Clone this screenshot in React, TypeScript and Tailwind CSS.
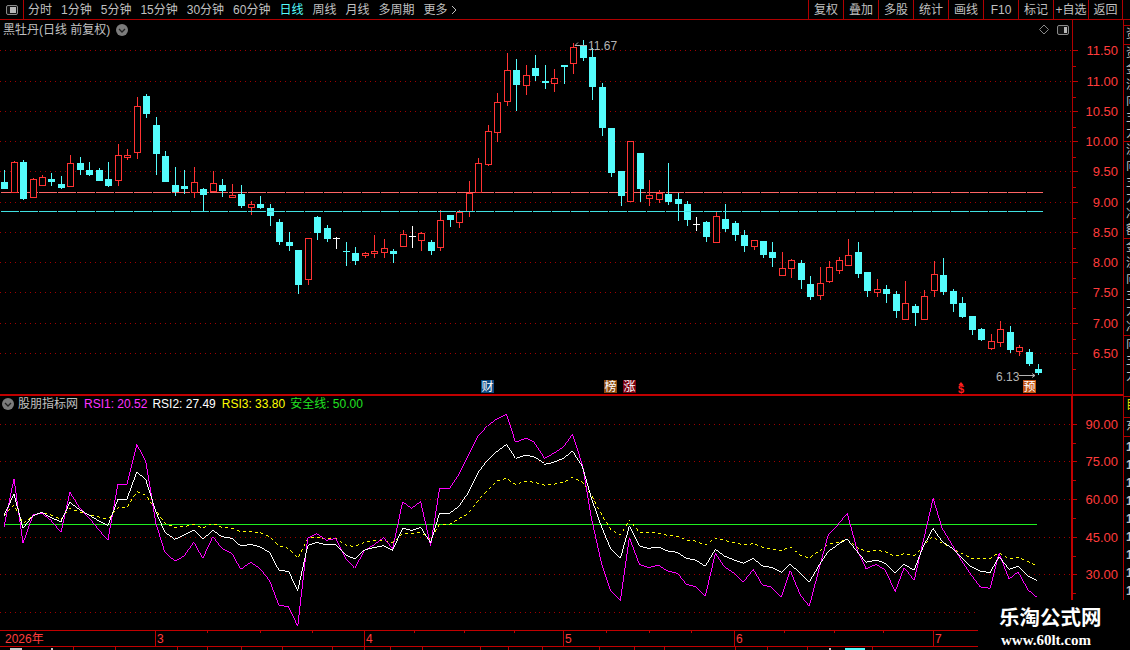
import React from 'react'

// [x, kind, high, top, bottom, low] in page pixels. c = down, r = up, w = doji
type Candle = [number, 'c' | 'r' | 'w', number, number, number, number]

const candles: Candle[] = [
  [4, 'c', 170, 182, 189, 189], [14, 'r', 161, 162, 192, 192], [23, 'c', 160, 162, 199, 200], [33, 'r', 178, 179, 197, 197],
  [42, 'r', 175, 177, 185, 186], [51, 'c', 173, 179, 182, 186], [61, 'c', 176, 184, 188, 189], [70, 'r', 155, 163, 186, 186],
  [80, 'c', 157, 163, 170, 175], [89, 'c', 162, 170, 175, 176], [99, 'c', 168, 170, 181, 181], [108, 'c', 162, 179, 186, 187],
  [118, 'r', 144, 155, 180, 186], [127, 'r', 149, 155, 157, 160], [137, 'r', 97, 106, 152, 159], [146, 'c', 94, 96, 114, 118],
  [156, 'c', 117, 125, 154, 175], [165, 'c', 151, 156, 182, 182], [175, 'c', 167, 185, 192, 196], [184, 'c', 170, 186, 189, 194],
  [194, 'r', 167, 182, 192, 198], [203, 'c', 188, 189, 195, 211], [213, 'r', 171, 183, 191, 191], [222, 'c', 179, 185, 191, 197],
  [232, 'r', 184, 195, 197, 197], [241, 'c', 185, 194, 206, 208], [251, 'r', 201, 204, 207, 215], [260, 'c', 196, 204, 208, 209],
  [270, 'c', 204, 208, 216, 226], [279, 'c', 219, 222, 242, 245], [289, 'c', 232, 242, 246, 251], [298, 'c', 250, 250, 285, 294],
  [308, 'r', 238, 238, 279, 285], [317, 'c', 216, 217, 233, 240], [327, 'c', 225, 228, 239, 242], [336, 'w', 237, 238, 238, 249],
  [346, 'c', 242, 251, 252, 266], [355, 'c', 247, 253, 261, 265], [365, 'r', 252, 253, 255, 258], [374, 'r', 235, 251, 253, 258],
  [384, 'r', 239, 248, 252, 258], [393, 'c', 249, 251, 254, 263], [403, 'r', 230, 234, 246, 246], [412, 'w', 226, 236, 236, 248],
  [421, 'r', 232, 233, 240, 251], [431, 'c', 240, 242, 251, 255], [440, 'r', 210, 220, 247, 251], [450, 'c', 215, 215, 220, 227],
  [459, 'r', 210, 212, 222, 228], [469, 'r', 181, 193, 211, 217], [478, 'r', 158, 163, 192, 193], [488, 'r', 125, 131, 164, 166],
  [497, 'r', 93, 102, 132, 142], [507, 'r', 53, 70, 101, 106], [516, 'c', 59, 70, 85, 111], [526, 'r', 65, 75, 85, 95],
  [535, 'c', 55, 68, 76, 81], [545, 'c', 65, 81, 83, 89], [554, 'r', 69, 78, 83, 92], [564, 'c', 65, 65, 67, 84],
  [573, 'r', 43, 47, 63, 74], [583, 'c', 40, 45, 58, 61], [592, 'c', 48, 57, 87, 100], [602, 'c', 83, 87, 128, 136],
  [611, 'c', 128, 128, 173, 177], [621, 'c', 171, 171, 196, 206], [630, 'r', 141, 141, 201, 201], [640, 'c', 153, 153, 189, 202],
  [649, 'r', 180, 195, 198, 206], [659, 'r', 190, 193, 199, 203], [668, 'c', 163, 194, 202, 205], [678, 'c', 193, 199, 204, 221],
  [687, 'c', 201, 204, 220, 226], [696, 'w', 217, 224, 224, 231], [706, 'c', 221, 222, 237, 242], [716, 'r', 212, 216, 242, 242],
  [725, 'c', 204, 219, 229, 232], [735, 'c', 221, 223, 235, 241], [744, 'c', 230, 235, 246, 252], [754, 'r', 240, 240, 246, 250],
  [763, 'c', 241, 241, 255, 258], [772, 'c', 242, 252, 258, 267], [782, 'r', 252, 268, 275, 275], [791, 'r', 259, 260, 268, 278],
  [801, 'c', 260, 263, 280, 289], [810, 'c', 276, 284, 297, 300], [820, 'r', 267, 283, 295, 300], [829, 'r', 261, 267, 281, 283],
  [839, 'r', 257, 260, 270, 274], [848, 'r', 239, 255, 265, 266], [858, 'c', 242, 252, 274, 278], [867, 'c', 272, 272, 291, 297],
  [877, 'r', 279, 289, 292, 297], [886, 'c', 285, 289, 294, 303], [896, 'c', 291, 294, 311, 318], [905, 'r', 281, 303, 319, 319],
  [915, 'c', 304, 306, 313, 326], [924, 'r', 290, 296, 319, 319], [934, 'r', 261, 274, 290, 297], [943, 'c', 258, 275, 292, 295],
  [953, 'c', 289, 291, 304, 312], [962, 'c', 297, 303, 317, 318], [972, 'c', 316, 316, 330, 335], [981, 'c', 328, 329, 340, 341],
  [991, 'r', 334, 341, 348, 350], [1000, 'r', 321, 329, 342, 347], [1010, 'c', 326, 332, 350, 353], [1019, 'r', 345, 347, 351, 356],
  [1029, 'c', 349, 352, 364, 366], [1038, 'c', 364, 369, 373, 375],
]

// rsi curves, one value per candle, in 1/3 px below the top of the lower panel
const rsi1 = [395, 252, 445, 360, 355, 376, 412, 292, 340, 368, 405, 436, 268, 268, 148, 200, 385, 472, 498, 484, 442, 490, 425, 460, 475, 523, 502, 520, 558, 630, 636, 694, 430, 416, 436, 430, 490, 520, 466, 450, 428, 462, 320, 340, 320, 452, 280, 280, 240, 180, 124, 92, 72, 57, 142, 130, 143, 190, 175, 155, 118, 210, 370, 505, 585, 617, 428, 508, 518, 511, 528, 535, 568, 575, 604, 475, 515, 535, 562, 523, 570, 576, 606, 527, 600, 634, 520, 420, 388, 355, 465, 522, 508, 525, 590, 518, 556, 440, 310, 400, 450, 495, 540, 576, 580, 475, 552, 531, 585, 607]
const rsi2 = [362, 297, 400, 362, 352, 368, 380, 322, 345, 360, 378, 392, 313, 313, 230, 255, 350, 412, 433, 420, 406, 433, 406, 425, 430, 453, 448, 456, 472, 525, 530, 587, 452, 442, 450, 448, 480, 492, 465, 458, 452, 466, 400, 406, 397, 443, 355, 355, 335, 292, 235, 195, 170, 148, 190, 180, 187, 208, 202, 190, 168, 215, 310, 395, 460, 490, 393, 453, 460, 456, 468, 472, 490, 495, 514, 463, 483, 495, 505, 490, 513, 517, 532, 508, 535, 562, 510, 470, 448, 432, 470, 502, 495, 505, 535, 508, 526, 455, 400, 440, 460, 485, 515, 528, 533, 485, 523, 514, 543, 556]
const rsi3 = [362, 330, 385, 362, 352, 360, 372, 340, 352, 358, 366, 372, 338, 338, 290, 300, 345, 385, 397, 395, 388, 400, 385, 397, 400, 410, 410, 413, 425, 453, 460, 490, 430, 427, 432, 430, 450, 455, 442, 438, 436, 443, 415, 415, 412, 432, 388, 388, 372, 355, 318, 285, 258, 250, 268, 258, 262, 270, 268, 262, 247, 262, 300, 358, 402, 420, 375, 412, 414, 414, 421, 424, 435, 438, 450, 430, 436, 443, 450, 446, 456, 463, 466, 456, 480, 490, 468, 448, 442, 432, 458, 470, 466, 470, 484, 476, 482, 450, 425, 445, 460, 475, 490, 490, 490, 473, 492, 487, 500, 512]

const toPoints = (vals: number[]) => vals.map((v, i) => `${candles[i][0]},${395 + v / 3}`).join(' ')

const tabs = ['分时', '1分钟', '5分钟', '15分钟', '30分钟', '60分钟', '日线', '周线', '月线', '多周期']
const tools = ['复权', '叠加', '多股', '统计', '画线', 'F10', '标记', '+自选', '返回']

const priceTicks = [
  ['11.50', 50], ['11.00', 81], ['10.50', 111], ['10.00', 141], ['9.50', 171], ['9.00', 202],
  ['8.50', 232], ['8.00', 262], ['7.50', 292], ['7.00', 323], ['6.50', 353],
] as const
const rsiTicks = [['90.00', 424], ['75.00', 461], ['60.00', 499], ['45.00', 537], ['30.00', 574]] as const

const grid = (y: number, w = 1072) => (
  <line key={y} x1={0} x2={w} y1={y + 0.5} y2={y + 0.5} stroke="#a00000" strokeDasharray="1 4" />
)

function CandleMark({ c }: { c: Candle }) {
  const [x, kind, high, top, bottom, low] = c
  if (kind === 'w') {
    return (
      <g fill="#fff">
        <rect x={x} y={high} width={1} height={low - high} />
        <rect x={x - 3} y={top} width={7} height={1} />
      </g>
    )
  }
  if (kind === 'c') {
    return (
      <g fill="#54fcfc">
        <rect x={x} y={high} width={1} height={low - high} />
        <rect x={x - 3} y={top} width={7} height={Math.max(bottom - top, 1)} />
      </g>
    )
  }
  return (
    <g>
      <rect x={x} y={high} width={1} height={low - high} fill="#ff3232" />
      <rect x={x - 2.5} y={top + 0.5} width={6} height={bottom - top} fill="#000" stroke="#ff3232" />
    </g>
  )
}

function Badge({ x, label, bg }: { x: number; label: string; bg: string }) {
  return (
    <g>
      <rect x={x} y={380} width={13} height={13} fill={bg} />
      <text x={x + 0.5} y={391} fontSize={12} fill="#fff">{label}</text>
    </g>
  )
}

function Chevron({ className }: { className: string }) {
  return (
    <svg viewBox="0 0 12 12" className={className}>
      <circle cx="6" cy="6" r="6" fill="#7c7c7c" />
      <path d="M3 5l3 3 3-3" fill="none" stroke="#222" strokeWidth="1.3" />
    </svg>
  )
}

function PanelIcon({ className, dark }: { className: string; dark?: boolean }) {
  return (
    <svg viewBox="0 0 12 10" className={className}>
      <rect x="0.5" y="0.5" width="11" height="9" rx="1.5" fill="#111" stroke="#8a8a8a" />
      <rect x={dark ? 7 : 4} y="2" width={dark ? 3 : 6} height="6" fill="#b8b8b8" />
    </svg>
  )
}

function Axis({ ticks, top, height, thick }: { ticks: readonly (readonly [string, number])[]; top: number; height: number; thick?: boolean }) {
  const step = ticks[1][1] - ticks[0][1]
  return (
    <svg width={50} height={height} viewBox={`1073 ${top} 50 ${height}`} shapeRendering="crispEdges" className="block">
      {ticks.map(([label, y]) => (
        <g key={label}>
          <rect x={1073} y={y} width={thick ? 4 : 5} height={1} fill="#c00000" />
          <rect x={1073} y={y + Math.round(step / 2)} width={3} height={1} fill="#c00000" />
          <text x={1118} y={y + 5} textAnchor="end" fontSize={13} fill="#ff3c3c" shapeRendering="auto">{label}</text>
        </g>
      ))}
    </svg>
  )
}

const sideTop = ['资', '金', '流', '向', '主', '力', '净', '额']

export default function App() {
  return (
    <div className="relative w-[1130px] h-[650px] overflow-hidden bg-black text-[12px] text-[#c0c0c0] [font-family:'Liberation_Sans','Noto_Sans_CJK_SC',sans-serif]">
      {/* top toolbar */}
      <div className="flex h-[20px] items-center border-b border-[#b00000]">
        <div className="flex h-full w-[24px] items-center justify-center border-r border-[#b00000]">
          <PanelIcon className="w-[12px] h-[10px]" />
        </div>
        <div className="ml-[4px] flex gap-[9px]">
          {tabs.map(t => (
            <span key={t} className={t === '日线' ? 'text-[#54fcfc]' : ''}>{t}</span>
          ))}
          <span className="flex items-center gap-[3px]">
            更多
            <svg width="6" height="10" viewBox="0 0 6 10"><path d="M1 1l4 4-4 4" fill="none" stroke="#c0c0c0" /></svg>
          </span>
        </div>
        <div className="ml-auto mr-[7px] flex h-full">
          {tools.map(t => (
            <span key={t} className="flex w-[35px] items-center justify-center border-l border-[#b00000] last:border-r">{t}</span>
          ))}
        </div>
      </div>

      <div className="flex">
        <div className="w-[1123px]">
          {/* price panel */}
          <div className="relative flex h-[376px] border-b-2 border-[#c00000]">
            <svg width={1072} height={374} viewBox="0 20 1072 374" shapeRendering="crispEdges" className="block">
              {priceTicks.map(([, y]) => grid(y))}
              <line x1={1} x2={1043} y1={192.5} y2={192.5} stroke="#ff6464" strokeDasharray="18 1" />
              {candles.map(c => <CandleMark key={c[0]} c={c} />)}
              <line x1={1} x2={1043} y1={211.5} y2={211.5} stroke="#40e0e0" strokeDasharray="18 1" />
              <g shapeRendering="auto">
                <text x={588} y={50} fontSize={12} fill="#b4b4b4">11.67</text>
                <path d="M587 45.5h-12l3-3" fill="none" stroke="#b4b4b4" />
                <text x={996} y={381} fontSize={12} fill="#b4b4b4">6.13</text>
                <path d="M1019 375.5h16l-3-2m3 2l-3 2" fill="none" stroke="#b4b4b4" />
                <Badge x={481} label="财" bg="#0c4a82" />
                <Badge x={604} label="榜" bg="#8a4a10" />
                <Badge x={623} label="涨" bg="#7a0010" />
                <Badge x={1023} label="预" bg="#c05010" />
                <path d="M961 382l2.5 3h-5z" fill="#ff1e1e" />
                <text x={958} y={393} fontSize={11} fontWeight={700} fill="#ff1e1e">$</text>
                <path d="M1044 25l4.5 4.5-4.5 4.5-4.5-4.5z" fill="none" stroke="#8a8a8a" />
              </g>
            </svg>
            <div className="border-l border-[#b00000]">
              <Axis ticks={priceTicks} top={20} height={374} />
            </div>
            <div className="absolute left-[3px] top-[1px] flex items-center gap-[6px]">
              <span>黑牡丹(日线 前复权)</span>
              <Chevron className="w-[12px] h-[12px]" />
            </div>
            <PanelIcon dark className="absolute left-[1057px] top-[5px] w-[12px] h-[10px]" />
          </div>

          {/* rsi panel */}
          <div className="relative flex h-[234px]">
            <svg width={1072} height={234} viewBox="0 396 1072 234" shapeRendering="crispEdges" className="block">
              {[424, 461, 499, 537, 574, 612].map(y => grid(y))}
              <line x1={5} x2={1038} y1={524.5} y2={524.5} stroke="#20f020" />
              <polyline points={toPoints(rsi3)} fill="none" stroke="#ffff00" strokeDasharray="3 3" />
              <polyline points={toPoints(rsi1)} fill="none" stroke="#ff00ff" />
              <polyline points={toPoints(rsi2)} fill="none" stroke="#fff" />
            </svg>
            <div className="border-l-2 border-[#c00000]">
              <Axis ticks={rsiTicks} top={396} height={234} thick />
            </div>
            <div className="absolute left-[2px] top-0 flex h-[16px] items-center whitespace-nowrap">
              <Chevron className="w-[12px] h-[12px]" />
              <span className="ml-[4px]">股朋指标网</span>
              <span className="ml-[6px] text-[#ff32ff]">RSI1: 20.52</span>
              <span className="ml-[5px] text-white">RSI2: 27.49</span>
              <span className="ml-[6px] text-[#ffff00]">RSI3: 33.80</span>
              <span className="ml-[5px] text-[#20e020]">安全线: 50.00</span>
            </div>
          </div>

          {/* time axis */}
          <svg width={1123} height={20} viewBox="0 630 1123 20" shapeRendering="crispEdges" className="block">
            <rect x={0} y={630} width={1123} height={1} fill="#c00000" />
            <rect x={0} y={646} width={1123} height={1} fill="#c00000" />
            {[207, 260, 312, 414, 464, 514, 606, 649, 691, 784, 834, 883].map(x => (
              <rect key={x} x={x} y={631} width={1} height={2} fill="#c00000" />
            ))}
            {[155, 364, 563, 734, 933].map(x => (
              <rect key={x} x={x} y={631} width={1} height={15} fill="#c00000" />
            ))}
            {[73, 115, 177, 207, 241, 282, 332, 364, 390, 422, 480, 508, 542, 599, 634, 664, 735, 767, 807, 872].map(x => (
              <rect key={x} x={x} y={647} width={1} height={3} fill="#c00000" />
            ))}
            <rect x={10} y={648} width={12} height={2} fill="#c8c8c8" />
            <rect x={51} y={648} width={2} height={2} fill="#c8c8c8" />
            <rect x={829} y={648} width={2} height={2} fill="#c8c8c8" />
            <rect x={845} y={648} width={20} height={2} fill="#54fcfc" />
            <g fontSize={12} fill="#ff3c3c" shapeRendering="auto">
              <text x={5} y={643}>2026年</text>
              <text x={157} y={643}>3</text>
              <text x={366} y={643}>4</text>
              <text x={565} y={643}>5</text>
              <text x={736} y={643}>6</text>
              <text x={935} y={643}>7</text>
            </g>
          </svg>
        </div>

        {/* right edge list, cut off by the window */}
        <div className="flex w-[7px] flex-col overflow-hidden border-l border-[#b00000] pt-[5px] whitespace-nowrap leading-[16px]">
          <div className="h-[20px] border-y border-[#b00000] pl-[2px]">资</div>
          <div className="h-[97px] border-b border-[#b00000] pl-[2px]">{sideTop.slice(0, 6).map(s => <div key={s}>{s}</div>)}</div>
          <div className="h-[97px] border-b border-[#b00000] pl-[2px]">{sideTop.slice(2).map(s => <div key={s}>{s}</div>)}</div>
          <div className="h-[97px] border-b border-[#b00000] pl-[2px]">{sideTop.slice(1, 7).map(s => <div key={s}>{s}</div>)}</div>
          <div className="h-[61px] border-b border-[#b00000] pl-[2px]">{sideTop.slice(3, 6).map(s => <div key={s}>{s}</div>)}</div>
          <div className="h-[21px] border-b border-[#b00000] pl-[2px] text-[#e0e000]">目</div>
          <div className="h-[19px] border-b border-[#b00000] pl-[2px]">东</div>
          <div className="flex flex-col pl-[2px] font-bold leading-[18px] pt-[1px]">
            {Array.from({ length: 9 }, (_, i) => <div key={i}>1</div>)}
          </div>
        </div>
      </div>

      {/* site watermark pasted over the corner */}
      <div className="absolute right-0 bottom-0 w-[152px] h-[50px] bg-black">
        <div className="absolute left-[21px] top-[6px] text-[20.5px] font-bold leading-[24px] text-white whitespace-nowrap">乐淘公式网</div>
        <div className="absolute left-[23px] top-[31px] text-[15px] font-bold leading-[18px] text-white whitespace-nowrap [font-family:'Liberation_Serif',serif]">www.60lt.com</div>
      </div>
    </div>
  )
}
